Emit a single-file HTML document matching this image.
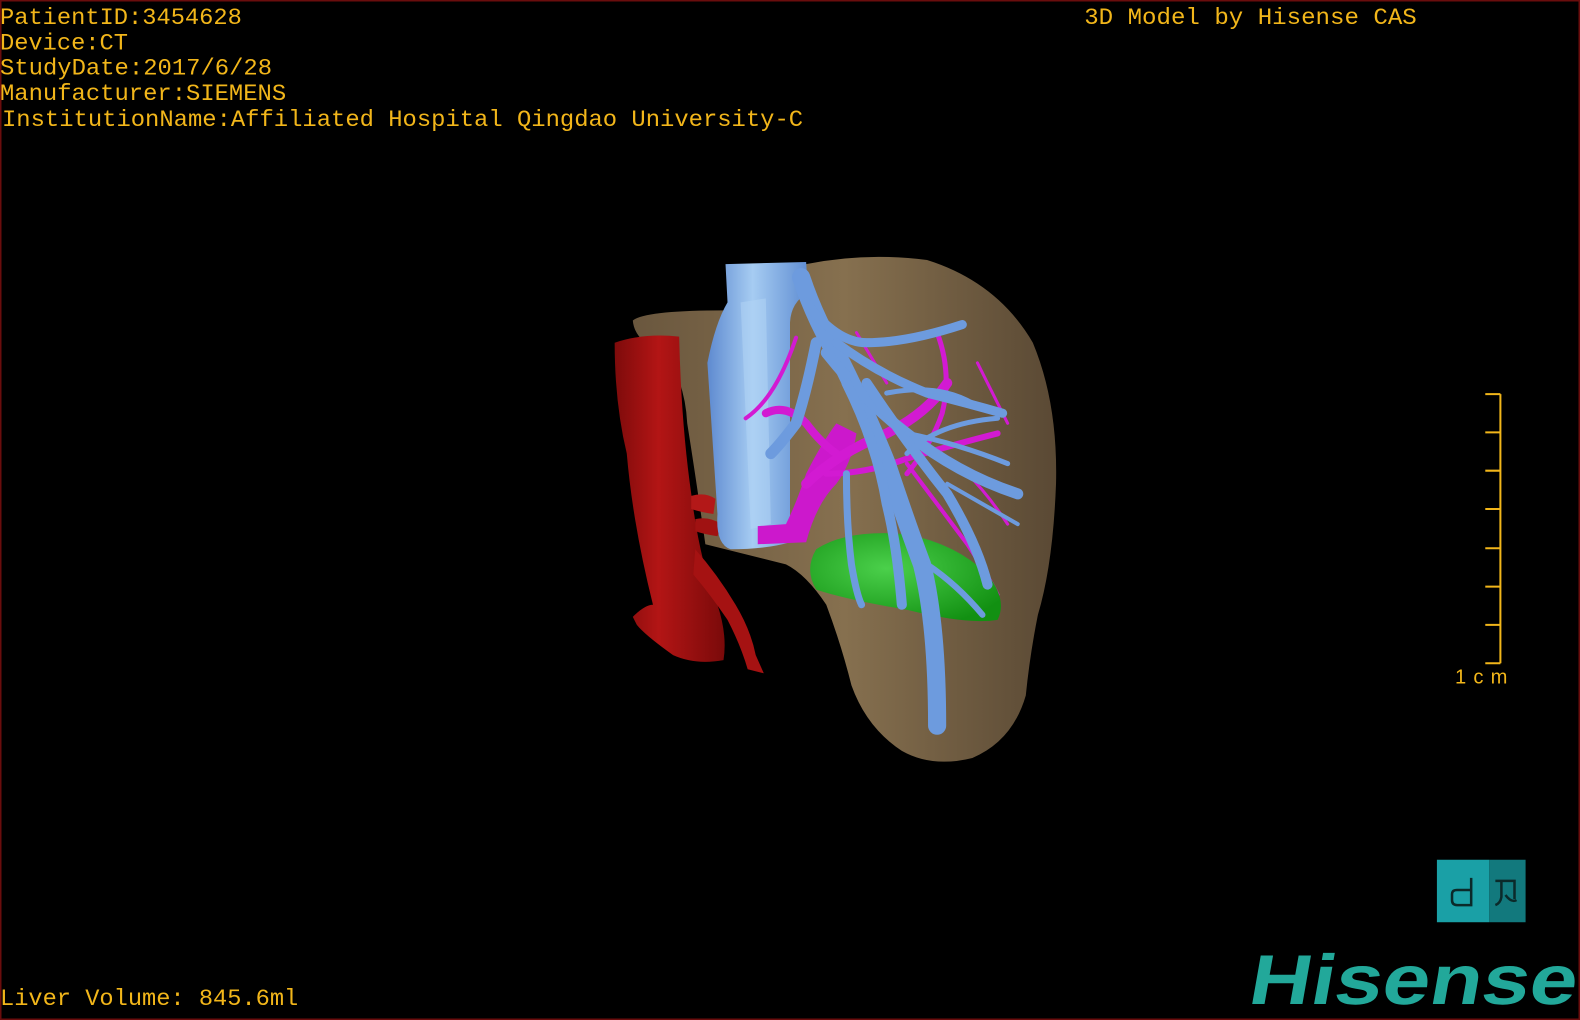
<!DOCTYPE html>
<html><head><meta charset="utf-8">
<style>
html,body{margin:0;padding:0;background:#000;width:1580px;height:1020px;overflow:hidden}
svg{display:block}
text{font-family:"Liberation Mono","DejaVu Sans Mono",monospace;fill:#f2b61a}
</style></head>
<body>
<svg width="1580" height="1020" viewBox="0 0 1568 1012" preserveAspectRatio="none" xmlns="http://www.w3.org/2000/svg">
<defs>
<linearGradient id="liv" x1="0" y1="0" x2="1" y2="0">
<stop offset="0" stop-color="#6a573e"/><stop offset="0.5" stop-color="#86704f"/><stop offset="1" stop-color="#5a4934"/>
</linearGradient>
<linearGradient id="red" x1="0" y1="0" x2="1" y2="0">
<stop offset="0" stop-color="#7e0b0b"/><stop offset="0.4" stop-color="#b31515"/><stop offset="1" stop-color="#7a0a0a"/>
</linearGradient>
<linearGradient id="blu" x1="0" y1="0" x2="1" y2="0">
<stop offset="0" stop-color="#5e8ad0"/><stop offset="0.45" stop-color="#a6ccf2"/><stop offset="1" stop-color="#5f8dd2"/>
</linearGradient>
<radialGradient id="grn" cx="0.4" cy="0.4" r="0.7">
<stop offset="0" stop-color="#4bd04b"/><stop offset="1" stop-color="#129012"/>
</radialGradient>
</defs>
<rect x="0" y="0" width="1568" height="1012" fill="#000"/>
<rect x="0.5" y="0.5" width="1567" height="1011" fill="none" stroke="#6a0d0d" stroke-width="2"/>

<!-- liver -->
<path d="M628 318 Q640 308 720 308 L800 262 Q860 250 920 258 Q990 280 1025 340 Q1050 400 1048 480 Q1045 560 1030 610 Q1022 650 1018 690 Q1005 735 965 752 Q925 762 895 745 Q860 722 845 680 Q835 640 820 600 Q800 570 780 560 L700 540 Q690 470 682 420 Q680 380 660 350 Q630 340 628 318 Z" fill="url(#liv)"/>

<!-- red aorta -->
<path d="M610 340 Q640 330 674 334 Q676 420 686 490 Q695 560 712 600 Q722 630 718 655 Q690 660 668 650 Q640 630 632 620 L628 612 Q640 600 648 600 Q628 520 622 450 Q610 400 610 340 Z" fill="url(#red)"/>
<path d="M690 545 Q712 570 730 600 Q745 625 750 650 L758 668 L742 664 Q735 640 722 615 Q705 590 688 570 Z" fill="#a51212"/>
<path d="M686 492 Q700 488 710 495 L708 510 Q695 508 686 505 Z" fill="#b31818"/>
<path d="M690 515 Q704 512 716 520 L712 532 Q698 530 690 527 Z" fill="#a01212"/>

<!-- blue cava -->
<path d="M720 262 L800 260 L802 290 Q785 300 784 320 L784 538 Q760 545 725 545 Q710 540 712 510 L702 360 Q710 320 722 300 Z" fill="url(#blu)"/>
<path d="M735 300 L760 296 L765 520 L745 525 Z" fill="#b4d6f6" opacity="0.5"/>

<!-- magenta portal -->
<path d="M752 540 L800 538 Q810 500 830 480 Q845 460 850 430 L830 420 Q815 440 800 470 Q790 500 780 520 L752 522 Z" fill="#cc18cc"/>
<g stroke="#d21ad2" fill="none" stroke-linecap="round">
<path d="M800 480 Q830 450 880 430 Q920 410 940 380" stroke-width="10"/>
<path d="M820 470 Q860 470 900 455 Q950 440 990 430" stroke-width="6"/>
<path d="M760 410 Q780 400 800 420 Q815 440 830 450" stroke-width="8"/>
<path d="M740 415 Q770 395 790 335" stroke-width="4"/>
<path d="M930 330 Q945 370 935 410 Q925 440 900 470" stroke-width="5"/>
<path d="M900 460 Q930 500 960 540 Q980 570 990 590" stroke-width="4"/>
<path d="M860 540 Q880 560 890 600" stroke-width="4"/>
<path d="M960 470 Q980 490 1000 520" stroke-width="3"/>
<path d="M970 360 L1000 420" stroke-width="3"/>
<path d="M850 330 L880 380" stroke-width="3"/>
</g>

<!-- green -->
<path d="M810 545 Q840 525 900 530 Q950 540 980 570 Q1000 595 990 615 Q960 620 900 605 Q840 595 810 585 Q798 565 810 545 Z" fill="url(#grn)"/>

<!-- blue branches -->
<g stroke="#6d9bde" fill="none" stroke-linecap="round">
<path d="M795 275 Q810 320 835 360 Q860 410 880 460 Q900 520 915 560 Q930 620 930 720" stroke-width="18"/>
<path d="M800 300 Q830 340 860 340 Q900 340 955 322" stroke-width="9"/>
<path d="M820 350 Q860 400 900 430 Q950 470 1010 490" stroke-width="11"/>
<path d="M830 340 Q870 370 920 390 Q960 400 995 410" stroke-width="9"/>
<path d="M840 380 Q870 440 880 500 Q890 540 895 600" stroke-width="10"/>
<path d="M860 380 Q900 440 940 490 Q970 540 980 580" stroke-width="10"/>
<path d="M810 340 Q800 390 790 420 Q775 440 765 450" stroke-width="11"/>
<path d="M840 470 Q840 520 845 560 Q850 590 855 600" stroke-width="7"/>
<path d="M880 390 Q930 380 965 400" stroke-width="5"/>
<path d="M900 450 Q930 420 990 415" stroke-width="5"/>
<path d="M920 560 Q950 580 975 610" stroke-width="6"/>
<path d="M900 430 Q950 440 1000 460" stroke-width="5"/>
<path d="M940 480 Q975 500 1010 520" stroke-width="4"/>
</g>

<!-- text -->
<g font-size="23">
<text x="0" y="24" textLength="240" lengthAdjust="spacingAndGlyphs">PatientID:3454628</text>
<text x="0" y="49" textLength="127" lengthAdjust="spacingAndGlyphs">Device:CT</text>
<text x="0" y="74" textLength="270" lengthAdjust="spacingAndGlyphs">StudyDate:2017/6/28</text>
<text x="0" y="99" textLength="284" lengthAdjust="spacingAndGlyphs">Manufacturer:SIEMENS</text>
<text x="2" y="125" textLength="795" lengthAdjust="spacingAndGlyphs">InstitutionName:Affiliated Hospital Qingdao University-C</text>
<text x="1076" y="24" textLength="330" lengthAdjust="spacingAndGlyphs">3D Model by Hisense CAS</text>
<text x="0" y="997" textLength="296" lengthAdjust="spacingAndGlyphs">Liver Volume: 845.6ml</text>
</g>

<!-- ruler -->
<g stroke="#f2b61a" stroke-width="2" fill="none">
<path d="M1489 391 V658"/>
<path d="M1474 391 H1489 M1474 429 H1489 M1474 467 H1489 M1474 505 H1489 M1474 544 H1489 M1474 582 H1489 M1474 620 H1489 M1474 658 H1489"/>
</g>
<text x="1444" y="678" font-size="20" textLength="52" lengthAdjust="spacing" style="font-family:'Liberation Sans',sans-serif">1cm</text>

<!-- dR badge -->
<rect x="1426" y="853" width="52" height="62" fill="#1aa0a6"/>
<rect x="1478" y="853" width="36" height="62" fill="#12797d"/>
<g stroke="#0b2a2a" stroke-width="2.5" fill="none">
<path d="M1460 871 V898 H1446 Q1441 898 1441 893 V887 Q1441 883 1446 883 H1460"/>
<path d="M1484 874 H1503 V892 M1490 874 V890 Q1489 896 1484 898 M1494 888 Q1500 896 1505 893"/>
</g>

<!-- Hisense logo -->
<g transform="translate(1237 996) skewX(-10)">
<text x="0" y="0" font-size="70" font-weight="bold" style="font-family:'Liberation Sans',sans-serif;fill:#22a89a" textLength="325" lengthAdjust="spacingAndGlyphs">Hisense</text>
</g>
</svg>
</body></html>
